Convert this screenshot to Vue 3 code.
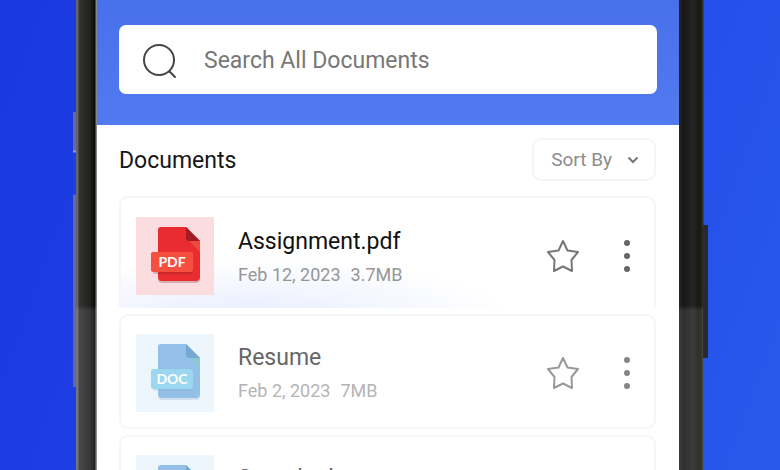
<script setup>
const docs = [
  { name: 'Assignment.pdf', date: 'Feb 12, 2023', size: '3.7MB', type: 'pdf' },
  { name: 'Resume', date: 'Feb 2, 2023', size: '7MB', type: 'doc' },
  { name: 'Sample doc', date: 'Feb 1, 2023', size: '2MB', type: 'doc' },
]
</script>

<template>
  <main class="stage">
    <div class="phone">
      <div class="bezel left"><i class="key"></i></div>
      <div class="screen">
        <header class="top">
          <label class="search">
            <svg class="lens" viewBox="0 0 36 36" aria-hidden="true">
              <circle cx="17" cy="17" r="15" />
              <path d="M27.5 28.5L33 34" />
            </svg>
            <input type="search" placeholder="Search All Documents" aria-label="Search All Documents" />
          </label>
        </header>
        <section class="content">
          <div class="bar">
            <h1>Documents</h1>
            <button class="sort" type="button">
              Sort By
              <svg viewBox="0 0 12 8" aria-hidden="true"><path d="M1.5 1.5L6 6l4.500-4.500" /></svg>
            </button>
          </div>
          <ul class="list">
            <li v-for="doc in docs" :key="doc.name" class="card" :class="doc.type">
              <div class="thumb">
                <svg viewBox="0 0 78 78" aria-hidden="true">
                  <path class="shade" d="M25 12h25l14 14v36q0 4-4 4H26q-4 0-4-4V15q0-3 3-3z" />
                  <path class="sheet" d="M25 10h25l14 14v36q0 4-4 4H26q-4 0-4-4V13q0-3 3-3z" />
                  <path class="fold" d="M50 10l14 14H53q-3 0-3-3z" />
                  <path class="glow" d="M53 24h11v11z" />
                  <rect class="shade" x="17" y="37" width="40" height="20" rx="2" />
                  <rect class="tag" x="15" y="35" width="42" height="20" rx="2" />
                  <text x="36" y="50" text-anchor="middle">{{ doc.type.toUpperCase() }}</text>
                </svg>
              </div>
              <div class="info">
                <h2>{{ doc.name }}</h2>
                <p><span>{{ doc.date }}</span><span>{{ doc.size }}</span></p>
              </div>
              <button class="star" type="button" aria-label="Add to favourites">
                <svg viewBox="0 0 34 34" aria-hidden="true">
                  <path d="M17 2l4.500 9.500L32 13l-6.500 8L26 32l-9-4.500L8 32l.5-11L2 13l10.500-1.500z" />
                </svg>
              </button>
              <button class="more" type="button" aria-label="More options">
                <svg viewBox="0 0 8 34" aria-hidden="true">
                  <circle cx="4" cy="4" r="3" /><circle cx="4" cy="17" r="3" /><circle cx="4" cy="30" r="3" />
                </svg>
              </button>
            </li>
          </ul>
        </section>
      </div>
      <div class="bezel right"><i class="key"></i></div>
    </div>
  </main>
</template>

<style>
body { margin: 0; }
</style>

<style scoped>
* { box-sizing: border-box; }
.stage {
  height: 100vh;
  overflow: hidden;
  padding: 0 76px;
  background: linear-gradient(110deg, #1a38e0 0%, #1e42e6 40%, #234be9 65%, #2959ec 100%);
  font-family: Roboto, "Liberation Sans", sans-serif;
}
.phone { display: flex; height: 100%; }
.bezel { position: relative; flex: none; }
.left {
  width: 21px;
  background:
    linear-gradient(transparent 65%, rgba(255, 255, 255, .1) 66%),
    linear-gradient(90deg, #64646a 0 2px, #343432 3px, #20201f 14px, #080808 19px, #85858a 20px);
}
.right {
  width: 25px;
  background:
    linear-gradient(transparent 65%, rgba(255, 255, 255, .1) 66%),
    linear-gradient(90deg, #222 0 2px, #171717 4px, #252525 14px, #171713 20px, #242412 23px, #454b78 25px);
}
.key { position: absolute; }
.left .key { left: -3px; top: 112px; width: 3px; height: 275px; background: linear-gradient(#5d6ba8 0 38px, #8a98dc 39px 40px, #1c3ee2 41px 82px, #5d6ba8 83px 100%); }
.right .key { right: -4px; top: 225px; width: 5px; height: 133px; background: #292a30; }
.screen { flex: 1; min-width: 0; overflow: hidden; background: #fff; }
.top { padding: 25px 22px 31px; background: linear-gradient(#4770eb, #527af0); }
.search {
  display: flex;
  align-items: center;
  gap: 26px;
  height: 69px;
  padding: 2px 23px 0;
  border-radius: 7px;
  background: #fff;
}
.lens { width: 36px; height: 36px; fill: none; stroke: #444; stroke-width: 2; stroke-linecap: round; }
.search input {
  flex: 1;
  min-width: 0;
  padding: 0;
  border: 0;
  outline: 0;
  background: none;
  font: 400 23px/32px Roboto, sans-serif;
  color: #666;
}
.search input::placeholder { color: #777; opacity: 1; }
.content { padding: 13px 23px 0 22px; }
.bar { display: flex; align-items: center; justify-content: space-between; height: 43px; }
h1, h2, p, ul { margin: 0; padding: 0; }
h1 { padding-top: 2px; font-size: 23px; font-weight: 400; line-height: 28px; color: #161616; }
button { border: 0; padding: 0; background: none; font-family: inherit; }
.sort {
  display: flex;
  align-items: center;
  gap: 15px;
  height: 43px;
  padding: 0 15px 0 17px;
  border: 2px solid #f5f5f5;
  border-radius: 9px;
  font-size: 19px;
  color: #8c8c8c;
}
.sort svg { width: 12px; height: 8px; fill: none; stroke: #777; stroke-width: 2; }
.list { display: flex; flex-direction: column; gap: 6px; margin-top: 15px; list-style: none; }
.card {
  display: flex;
  align-items: center;
  height: 115px;
  padding: 2px 23px 0 15px;
  border: 2px solid #f6f6f6;
  border-radius: 9px;
}
.pdf {
  height: 112px;
  padding-top: 6px;
  border-bottom: 0;
  border-radius: 9px 9px 0 0;
  background: radial-gradient(ellipse 260px 55px at 24% 106%, #e9edff, #fff);
}
.thumb { width: 78px; height: 78px; background: #fbdde0; }
.thumb svg { display: block; width: 78px; height: 78px; }
.doc .thumb { background: #edf5fd; }
.sheet { fill: #e92c2f; }
.fold { fill: #a31c22; }
.glow { fill: #f04a40; }
.tag { fill: #f5503f; }
.shade { fill: #6b1b20; opacity: .25; }
.doc .sheet { fill: #94c0e8; }
.doc .fold { fill: #76a8d2; }
.doc .glow { fill: #8ec6d8; }
.doc .tag { fill: #9bd8f0; }
.doc .shade { fill: #7aa4c8; }
.thumb text { fill: #fff; font: 700 14px Lato, sans-serif; }
.info { flex: 1; min-width: 0; margin-left: 24px; padding-top: 5px; }
h2 { font-size: 23px; font-weight: 400; line-height: 32px; color: #111; }
.info p { display: flex; gap: 10px; font-size: 18px; line-height: 34px; color: #969696; }
.doc h2 { color: #666; }
.doc .info p { color: #b4b4b4; }
.star svg { display: block; width: 34px; height: 34px; fill: none; stroke: #777; stroke-width: 2; stroke-linejoin: round; }
.more { margin-left: 43px; }
.more svg { display: block; width: 8px; height: 34px; fill: #666; }
.doc .star svg { stroke: #999; }
.doc .more svg { fill: #858585; }
</style>
